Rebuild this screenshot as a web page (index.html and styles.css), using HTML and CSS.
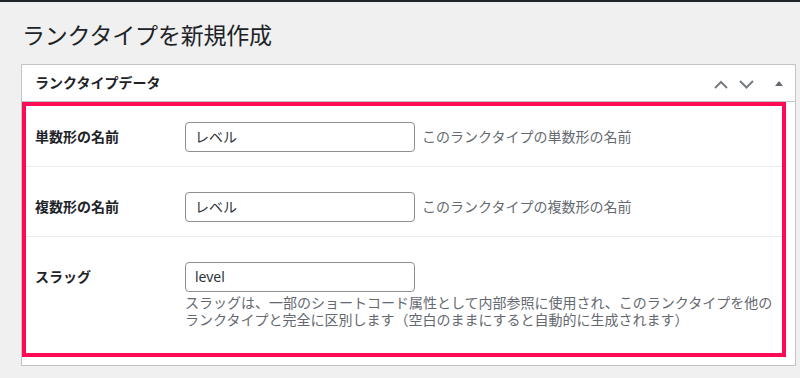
FILE: index.html
```html
<!DOCTYPE html>
<html lang="ja">
<head>
<meta charset="utf-8">
<title>ランクタイプを新規作成</title>
<link rel="stylesheet" href="styles.css">
</head>
<body>
<div class="adminbar-edge"></div>
<div class="wrap">
  <h1 class="page-title">ランクタイプを新規作成</h1>
  <div class="postbox">
    <div class="postbox-header">
      <h2 class="postbox-title">ランクタイプデータ</h2>
      <div class="handle-actions">
        <svg class="icon-up" width="14" height="9" viewBox="0 0 14 9"><path d="M1 8 L7 2 L13 8" fill="none" stroke="#787c82" stroke-width="2"/></svg>
        <svg class="icon-down" width="15" height="9" viewBox="0 0 15 9"><path d="M1 1 L7.5 7.5 L14 1" fill="none" stroke="#787c82" stroke-width="2"/></svg>
        <svg class="icon-tri" width="8" height="6" viewBox="0 0 8 6"><path d="M0 6 L4 1 L8 6 Z" fill="#646970"/></svg>
      </div>
    </div>
    <div class="inside">
      <div class="form-row first">
        <div class="label">単数形の名前</div>
        <div class="field">
          <div class="input-line">
            <div class="text-input">レベル</div>
            <span class="desc-inline">このランクタイプの単数形の名前</span>
          </div>
        </div>
      </div>
      <div class="form-row">
        <div class="label">複数形の名前</div>
        <div class="field">
          <div class="input-line">
            <div class="text-input">レベル</div>
            <span class="desc-inline">このランクタイプの複数形の名前</span>
          </div>
        </div>
      </div>
      <div class="form-row last">
        <div class="label">スラッグ</div>
        <div class="field">
          <div class="input-line">
            <div class="text-input latin">level</div>
          </div>
          <p class="desc-block">スラッグは、一部のショートコード属性として内部参照に使用され、このランクタイプを他のランクタイプと完全に区別します（空白のままにすると自動的に生成されます）</p>
        </div>
      </div>
    </div>
  </div>
</div>
</body>
</html>
```

FILE: styles.css
```css
* {
  box-sizing: border-box;
}

html, body {
  margin: 0;
  padding: 0;
  background: #f0f0f1;
  font-family: "Noto Sans", "Noto Sans CJK JP", sans-serif;
  color: #1d2327;
  font-size: 14px;
}

.adminbar-edge {
  height: 2px;
  background: #1d2327;
}

.wrap {
  padding-left: 21px;
}

.page-title {
  margin: 18px 0 14px 1px;
  font-size: 23px;
  font-weight: 400;
  line-height: 30px;
  color: #1d2327;
  letter-spacing: -0.2px;
}

.postbox {
  width: 775px;
  background: #fff;
  border: 1px solid #c3c4c7;
}

.postbox-header {
  display: flex;
  align-items: center;
  justify-content: space-between;
  height: 37px;
  border-bottom: 1px solid #c3c4c7;
}

.postbox-title {
  margin: 0 0 0 13px;
  font-size: 14px;
  font-weight: 700;
  line-height: 20px;
}

.handle-actions {
  display: flex;
  align-items: center;
  padding-right: 12px;
  padding-top: 2px;
}

.icon-up {
  display: block;
  margin-right: 11px;
}

.icon-down {
  display: block;
  margin-right: 21px;
}

.icon-tri {
  display: block;
  margin-top: -3px;
}

.inside {
  margin: 0 9px 8px 0;
  border: 4px solid #ff0a54;
}

.form-row {
  display: flex;
  padding: 25px 0 14px 9px;
  border-bottom: 1px solid #ebebeb;
}

.form-row.first {
  padding-top: 16px;
}

.form-row.last {
  border-bottom: none;
  padding-bottom: 25px;
}

.label {
  width: 150px;
  flex: none;
  font-weight: 700;
  line-height: 30px;
  font-size: 14px;
  color: #1d2327;
}

.field {
  flex: 1;
  min-width: 0;
}

.input-line {
  display: flex;
  align-items: center;
}

.text-input {
  width: 230px;
  height: 30px;
  border: 1px solid #8c8f94;
  border-radius: 4px;
  padding: 0 9px;
  line-height: 28px;
  font-size: 14px;
  color: #2c3338;
  background: #fff;
}

.desc-inline {
  margin-left: 7px;
  color: #646970;
  font-size: 14px;
  line-height: 20px;
}

.desc-block {
  margin: 2px 0 0 0;
  color: #646970;
  font-size: 14px;
  line-height: 17px;
  padding-right: 2px;
}
```
